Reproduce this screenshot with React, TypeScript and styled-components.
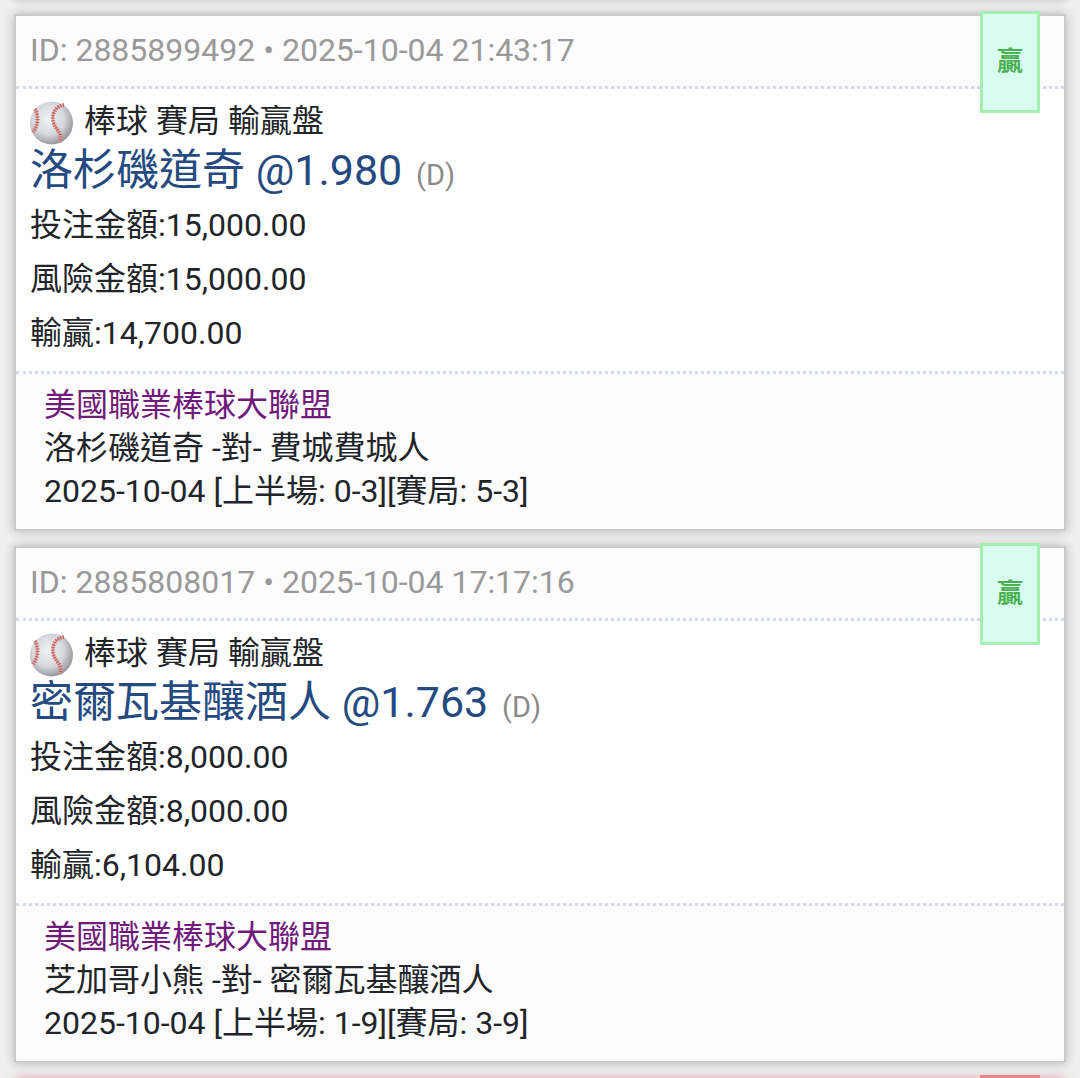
import React from 'react';
import styled, { createGlobalStyle } from 'styled-components';

const GlobalStyle = createGlobalStyle`
  * { box-sizing: border-box; }
  body {
    margin: 0;
    background: #f0f0f0;
    color: #212529;
    font-family: Roboto, "Noto Sans CJK TC", sans-serif;
    font-size: 32px;
  }
`;

const BetList = styled.main`
  display: flex;
  flex-direction: column;
  gap: 15px;
  height: 100vh;
  padding: 0 14px;
  overflow: hidden;
`;

const Card = styled.article<{ $lost?: boolean }>`
  position: relative;
  flex: none;
  border: 2px solid ${(p) => (p.$lost ? '#e3a5a9' : '#cbcbcb')};
  background: #ffffff;
  box-shadow: 0 0 10px ${(p) => (p.$lost ? 'rgba(220, 80, 90, 0.5)' : 'rgba(0, 0, 0, 0.26)')};
`;

const CardEdge = styled(Card)<{ $above?: boolean }>`
  height: 16px;
  margin-top: ${(p) => (p.$above ? '-17px' : '0')};
`;

const Badge = styled.span<{ $lost?: boolean }>`
  position: absolute;
  top: -5px;
  right: 24px;
  width: 60px;
  height: 102px;
  padding-top: 29px;
  border: 3px solid ${(p) => (p.$lost ? '#e08a8e' : '#a3f0b1')};
  background: ${(p) => (p.$lost ? '#f9b9bc' : '#d9fcf0')};
  color: #4caf50;
  font-size: 26px;
  font-weight: 700;
  line-height: 36px;
  text-align: center;
`;

const CardHeader = styled.header`
  padding: 12px 14px 14px;
  border-bottom: 3px dotted #d3d9f3;
  background: #fcfcfc;
  color: #999999;
  line-height: 44px;
`;

const CardBody = styled.section`
  padding: 8px 14px 11px;
`;

const MarketRow = styled.div`
  display: flex;
  align-items: center;
  gap: 11px;
  line-height: 44px;
`;

const BallIcon = styled.svg`
  flex: none;
  width: 43px;
  height: 44px;
  margin-top: 4px;
`;

const Selection = styled.h2`
  margin: 0 0 3px;
  color: #254a7f;
  font-size: 43px;
  font-weight: 400;
  line-height: 50px;
`;

const OddsType = styled.small`
  margin-left: 3px;
  color: #8a8a8a;
  font-size: 29px;
  line-height: 1;
`;

const Amount = styled.p`
  margin: 0;
  line-height: 54px;
`;

const CardFooter = styled.footer`
  padding: 10px 28px 16px;
  border-top: 3px dotted #d3d9f3;
  background: #fcfcfc;
  line-height: 43px;
`;

const League = styled.div`
  color: #701a7a;
`;

function Baseball() {
  return (
    <BallIcon viewBox="0 0 43 44" aria-hidden="true">
      <defs>
        <radialGradient id="ball" cx="42%" cy="40%" r="62%">
          <stop offset="0" stopColor="#f2f3f8" />
          <stop offset="0.6" stopColor="#d6d7de" />
          <stop offset="1" stopColor="#96949b" />
        </radialGradient>
      </defs>
      <circle cx="21.5" cy="22" r="21.5" fill="url(#ball)" />
      <g fill="none" stroke="#c9675f">
        <path d="M34 4C26 5 22 12 23 19C24 29 33 30 30 41" stroke="#d99c94" strokeWidth="2" />
        <path d="M34 4C26 5 22 12 23 19C24 29 33 30 30 41" strokeWidth="4" strokeDasharray="1.2 1.4" />
        <path d="M5 8C9 15 8 25 3 31" stroke="#d99c94" strokeWidth="2" />
        <path d="M5 8C9 15 8 25 3 31" strokeWidth="4" strokeDasharray="1.2 1.4" />
      </g>
    </BallIcon>
  );
}

interface Bet {
  id: string;
  time: string;
  pick: string;
  odds: string;
  stake: string;
  risk: string;
  result: string;
  match: string;
  score: string;
}

const bets: Bet[] = [
  {
    id: '2885899492',
    time: '2025-10-04 21:43:17',
    pick: '洛杉磯道奇',
    odds: '1.980',
    stake: '15,000.00',
    risk: '15,000.00',
    result: '14,700.00',
    match: '洛杉磯道奇 -對- 費城費城人',
    score: '2025-10-04 [上半場: 0-3][賽局: 5-3]',
  },
  {
    id: '2885808017',
    time: '2025-10-04 17:17:16',
    pick: '密爾瓦基釀酒人',
    odds: '1.763',
    stake: '8,000.00',
    risk: '8,000.00',
    result: '6,104.00',
    match: '芝加哥小熊 -對- 密爾瓦基釀酒人',
    score: '2025-10-04 [上半場: 1-9][賽局: 3-9]',
  },
];

function BetCard({ bet }: { bet: Bet }) {
  return (
    <Card>
      <Badge>贏</Badge>
      <CardHeader>{`ID: ${bet.id} • ${bet.time}`}</CardHeader>
      <CardBody>
        <MarketRow>
          <Baseball />
          <span>棒球 賽局 輸贏盤</span>
        </MarketRow>
        <Selection>
          {`${bet.pick} @${bet.odds} `}
          <OddsType>(D)</OddsType>
        </Selection>
        <Amount>{`投注金額:${bet.stake}`}</Amount>
        <Amount>{`風險金額:${bet.risk}`}</Amount>
        <Amount>{`輸贏:${bet.result}`}</Amount>
      </CardBody>
      <CardFooter>
        <League>美國職業棒球大聯盟</League>
        <div>{bet.match}</div>
        <div>{bet.score}</div>
      </CardFooter>
    </Card>
  );
}

export default function App() {
  return (
    <>
      <GlobalStyle />
      <BetList lang="zh-Hant">
        <CardEdge $above />
        {bets.map((bet) => (
          <BetCard key={bet.id} bet={bet} />
        ))}
        <CardEdge $lost>
          <Badge $lost />
        </CardEdge>
      </BetList>
    </>
  );
}
